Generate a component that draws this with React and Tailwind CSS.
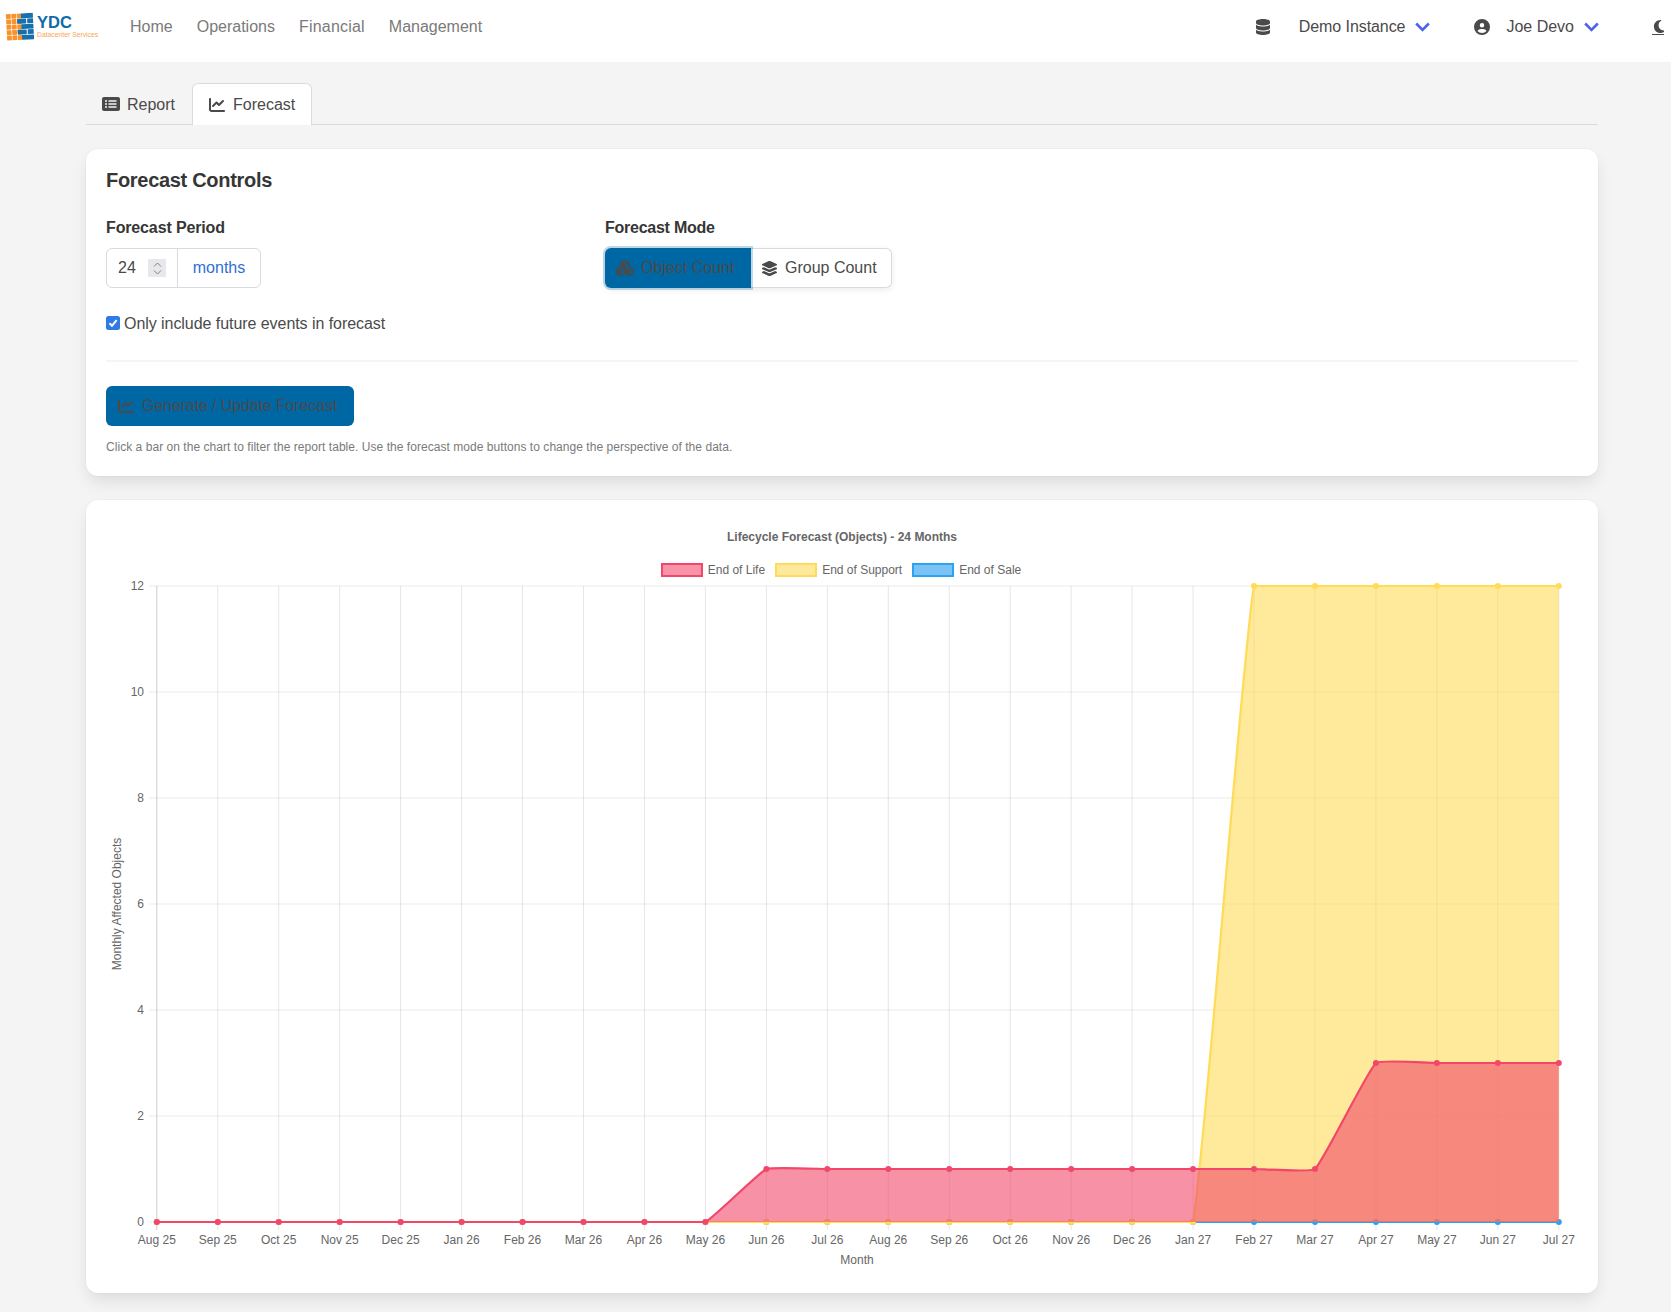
import React from "react";
import { FaDatabase, FaCircleUser, FaMoon, FaRectangleList, FaChartLine, FaCubes, FaLayerGroup } from "react-icons/fa6";

const months = ["Aug 25","Sep 25","Oct 25","Nov 25","Dec 25","Jan 26","Feb 26","Mar 26","Apr 26","May 26","Jun 26","Jul 26","Aug 26","Sep 26","Oct 26","Nov 26","Dec 26","Jan 27","Feb 27","Mar 27","Apr 27","May 27","Jun 27","Jul 27"];
const X0 = 156.8, X1 = 1558.8, Y0 = 1222, Y12 = 586;
const px = (i) => X0 + ((X1 - X0) * i) / 23;
const py = (v) => Y0 - ((Y0 - Y12) * v) / 12;
const eol = months.map((_, i) => (i < 10 ? 0 : i < 20 ? 1 : 3));
const eos = months.map((_, i) => (i < 18 ? 0 : 12));
const eosale = months.map(() => 0);

function spline(data) {
  const pts = data.map((v, i) => [px(i), py(v)]);
  const t = 0.1;
  const cps = pts.map((p, i) => {
    const a = pts[i - 1] || p;
    const b = pts[i + 1] || p;
    const d01 = Math.hypot(p[0] - a[0], p[1] - a[1]);
    const d12 = Math.hypot(b[0] - p[0], b[1] - p[1]);
    const s01 = d01 / (d01 + d12) || 0;
    const s12 = d12 / (d01 + d12) || 0;
    return {
      prev: [p[0] - t * s01 * (b[0] - a[0]), Math.min(Y0, Math.max(Y12, p[1] - t * s01 * (b[1] - a[1])))],
      next: [p[0] + t * s12 * (b[0] - a[0]), Math.min(Y0, Math.max(Y12, p[1] + t * s12 * (b[1] - a[1])))],
    };
  });
  let d = `M${pts[0][0]} ${pts[0][1]}`;
  for (let i = 1; i < pts.length; i++) {
    d += ` C${cps[i - 1].next[0]} ${cps[i - 1].next[1]} ${cps[i].prev[0]} ${cps[i].prev[1]} ${pts[i][0]} ${pts[i][1]}`;
  }
  return d;
}

function Series({ data, stroke, fill }) {
  const d = spline(data);
  return (
    <g>
      <path d={`${d} L${X1} ${Y0} L${X0} ${Y0} Z`} fill={fill} />
      <path d={d} fill="none" stroke={stroke} strokeWidth="2.2" />
      {data.map((v, i) => (
        <circle key={i} cx={px(i)} cy={py(v)} r="3" fill={stroke} />
      ))}
    </g>
  );
}

function Chart() {
  return (
    <svg viewBox="86 580 1512 713" className="block w-full h-[713px]">
      {[0, 2, 4, 6, 8, 10, 12].map((v) => (
        <g key={v}>
          <line x1="149" x2={X1} y1={py(v)} y2={py(v)} stroke="rgba(0,0,0,0.08)" />
          <text x="144" y={py(v) + 4} textAnchor="end" fontSize="12" fill="#666">{v}</text>
        </g>
      ))}
      {months.map((m, i) => (
        <g key={m}>
          <line x1={px(i)} x2={px(i)} y1={Y12} y2={Y0 + 8} stroke={i === 0 ? "rgba(0,0,0,0.2)" : "rgba(0,0,0,0.1)"} />
          <text x={px(i)} y="1244" textAnchor="middle" fontSize="12" fill="#666">{m}</text>
        </g>
      ))}
      <text x="857" y="1264" textAnchor="middle" fontSize="12" fill="#666">Month</text>
      <text transform="translate(121 904) rotate(-90)" textAnchor="middle" fontSize="12" fill="#666">Monthly Affected Objects</text>
      <Series data={eosale} stroke="#2aa3f3" fill="rgba(42,163,243,0.6)" />
      <Series data={eos} stroke="#ffdb58" fill="rgba(255,216,77,0.57)" />
      <Series data={eol} stroke="#f2476a" fill="rgba(242,71,106,0.6)" />
    </svg>
  );
}

function Logo() {
  const orange = [];
  for (let r = 0; r < 5; r++) for (let c = 0; c < 3; c++) orange.push([c * 5.4, r * 5.4]);
  const blue = [
    [15, 0, 12], [11, 5.4, 9], [21, 5.4, 6], [15, 10.8, 12], [11, 16.2, 9], [21, 16.2, 6], [15, 21.6, 12],
  ];
  return (
    <svg width="28" height="28" viewBox="-0.5 -0.5 28 28" className="shrink-0 -rotate-3">
      {orange.map(([x, y], i) => (
        <rect key={i} x={x} y={y} width="4.8" height="4.8" rx="0.6" fill="#f8922a" />
      ))}
      {blue.map(([x, y, w], i) => (
        <rect key={i} x={x} y={y} width={w} height="4.8" rx="0.6" fill="#1670ad" />
      ))}
    </svg>
  );
}

function Chevron() {
  return (
    <svg width="15" height="10" viewBox="0 0 15 10" fill="none" stroke="#4e62ef" strokeWidth="2.6" className="shrink-0 block">
      <path d="M1.2 1.5 L7.5 8 L13.8 1.5" />
    </svg>
  );
}

function Nav() {
  return (
    <nav className="h-[62px] bg-white flex items-center pl-[6px] pb-[8px] text-[16px]">
      <div className="flex items-center w-[124px]">
        <Logo />
        <div className="ml-[3px] -mt-[2px]">
          <div className="text-[16.5px] leading-[17px] font-bold text-[#0e6aa8]">YDC</div>
          <div className="text-[6.8px] leading-[8px] text-[#f9a65a] whitespace-nowrap">Datacenter Services</div>
        </div>
      </div>
      <div className="flex gap-6 text-[#7a7a7a]">
        <span>Home</span>
        <span>Operations</span>
        <span className="tracking-[0.2px]">Financial</span>
        <span>Management</span>
      </div>
      <div className="flex-1" />
      <div className="flex items-center text-[#4a4a4a]">
        <FaDatabase className="w-[14px] h-4" />
        <span className="ml-[29px] tracking-[-0.08px]">Demo Instance</span>
        <span className="ml-[10px]"><Chevron /></span>
        <FaCircleUser className="ml-[44px] w-4 h-4" />
        <span className="ml-4">Joe Devo</span>
        <span className="ml-[10px]"><Chevron /></span>
        <span className="ml-[53px] mr-[7px] w-3 h-4 overflow-hidden border-b border-[#4a4a4a] block">
          <FaMoon className="w-[15px] h-[15px]" />
        </span>
      </div>
    </nav>
  );
}

export default function App() {
  return (
    <div className="min-h-[1312px] bg-[#f4f4f4] text-[#4a4a4a] font-['Liberation_Sans',Arial,sans-serif] [text-rendering:optimizeLegibility]">
      <Nav />
      <main className="pl-[86px] pr-[73px] pt-[21px] pb-[19px]">
        <div className="flex h-[42px] border-b border-[#d8dae2] text-[16px]">
          <div className="w-[106px] flex items-center pl-4 gap-[7px] pt-[1px]">
            <FaRectangleList className="w-[18px] h-4" />
            <span className="mt-[1px]">Report</span>
          </div>
          <div className="w-[120px] h-[42px] flex items-center pl-4 gap-2 pt-[1px] bg-white border border-b-0 border-[#d8dae2] rounded-t-[6px]">
            <FaChartLine className="w-4 h-4" />
            <span>Forecast</span>
          </div>
        </div>

        <section className="mt-6 bg-white rounded-xl shadow-[0_8px_16px_-2px_rgba(10,10,10,0.1),0_0_0_1px_rgba(10,10,10,0.02)] p-5">
          <h2 className="text-[20px] leading-[22px] font-semibold text-[#363636] tracking-[-0.3px]">Forecast Controls</h2>
          <div className="mt-[25px] flex">
            <div className="w-[499px]">
              <div className="font-bold text-[16px] leading-6 text-[#363636] tracking-[-0.14px]">Forecast Period</div>
              <div className="mt-2 flex w-[155px] h-10 border border-[#d8dae2] rounded-[6px] text-[16px]">
                <div className="w-[70px] flex items-center justify-between pl-[11px] pr-[11px]">
                  <span>24</span>
                  <span className="w-[18px] h-[18px] bg-[#e8e8ec] flex flex-col items-center justify-center gap-[3px]">
                    <svg width="9" height="5" viewBox="0 0 9 5" fill="none" stroke="#808080"><path d="M1 4.5 L4.5 1 L8 4.5" /></svg>
                    <svg width="9" height="5" viewBox="0 0 9 5" fill="none" stroke="#808080"><path d="M1 0.5 L4.5 4 L8 0.5" /></svg>
                  </span>
                </div>
                <div className="flex-1 border-l border-[#d8dae2] flex items-center justify-center text-[#2f6fd6]">months</div>
              </div>
            </div>
            <div>
              <div className="font-bold text-[16px] leading-6 text-[#363636] tracking-[-0.25px]">Forecast Mode</div>
              <div className="mt-2 flex h-10 text-[16px] rounded-[6px] shadow-[0_2px_6px_rgba(10,10,10,0.08)]">
                <div className="w-[146px] flex items-center pl-[11px] gap-[7px] bg-[#0067a5] rounded-l-[6px] shadow-[0_0_0_2px_rgba(0,103,165,0.25)] relative">
                  <FaCubes className="w-[18px] h-[18px]" />
                  <span>Object Count</span>
                </div>
                <div className="w-[141px] flex items-center pl-[10px] gap-[7px] bg-white border border-l-0 border-[#d8dae2] rounded-r-[6px]">
                  <FaLayerGroup className="w-[17px] h-[17px]" />
                  <span>Group Count</span>
                </div>
              </div>
            </div>
          </div>
          <label className="mt-[23px] flex items-center h-6 text-[16px] gap-1">
            <span className="w-[14px] h-[14px] rounded-[2.5px] bg-[#2f7ae5] flex items-center justify-center">
              <svg width="10" height="10" viewBox="0 0 10 10" fill="none" stroke="#fff" strokeWidth="2"><path d="M1.5 5.2 L4 7.8 L8.6 2.2" /></svg>
            </span>
            <span className="pt-[1px] tracking-[-0.055px]">Only include future events in forecast</span>
          </label>
          <div className="mt-[25px] h-[2px] bg-[#f5f5f5]" />
          <div className="mt-6 w-[248px] h-10 rounded-[6px] bg-[#0067a5] flex items-center pl-3 gap-2 text-[16px]">
            <FaChartLine className="w-4 h-4" />
            <span className="tracking-[-0.12px]">Generate / Update Forecast</span>
          </div>
          <p className="mt-3 text-[12px] leading-[18px] text-[#7a7a7a] tracking-[0.044px]">
            Click a bar on the chart to filter the report table. Use the forecast mode buttons to change the perspective of the data.
          </p>
        </section>

        <section className="mt-6 bg-white rounded-xl shadow-[0_8px_16px_-2px_rgba(10,10,10,0.1),0_0_0_1px_rgba(10,10,10,0.02)] pt-[29px] flex flex-col">
          <div className="text-center text-[12px] leading-4 font-bold text-[#666]">Lifecycle Forecast (Objects) - 24 Months</div>
          <div className="mt-[18px] mb-[3px] pr-[2px] flex justify-center gap-[10px] text-[12px] leading-[14px] text-[#666]">
            <div className="flex items-center gap-[5px]">
              <span className="w-[42px] h-[14px] border-2 border-[#f2476a] bg-[#f993a8]" />End of Life
            </div>
            <div className="flex items-center gap-[5px]">
              <span className="w-[42px] h-[14px] border-2 border-[#ffdb58] bg-[#ffe99c]" />End of Support
            </div>
            <div className="flex items-center gap-[5px]">
              <span className="w-[42px] h-[14px] border-2 border-[#2aa3f3] bg-[#7cc3f5]" />End of Sale
            </div>
          </div>
          <Chart />
        </section>
      </main>
    </div>
  );
}
